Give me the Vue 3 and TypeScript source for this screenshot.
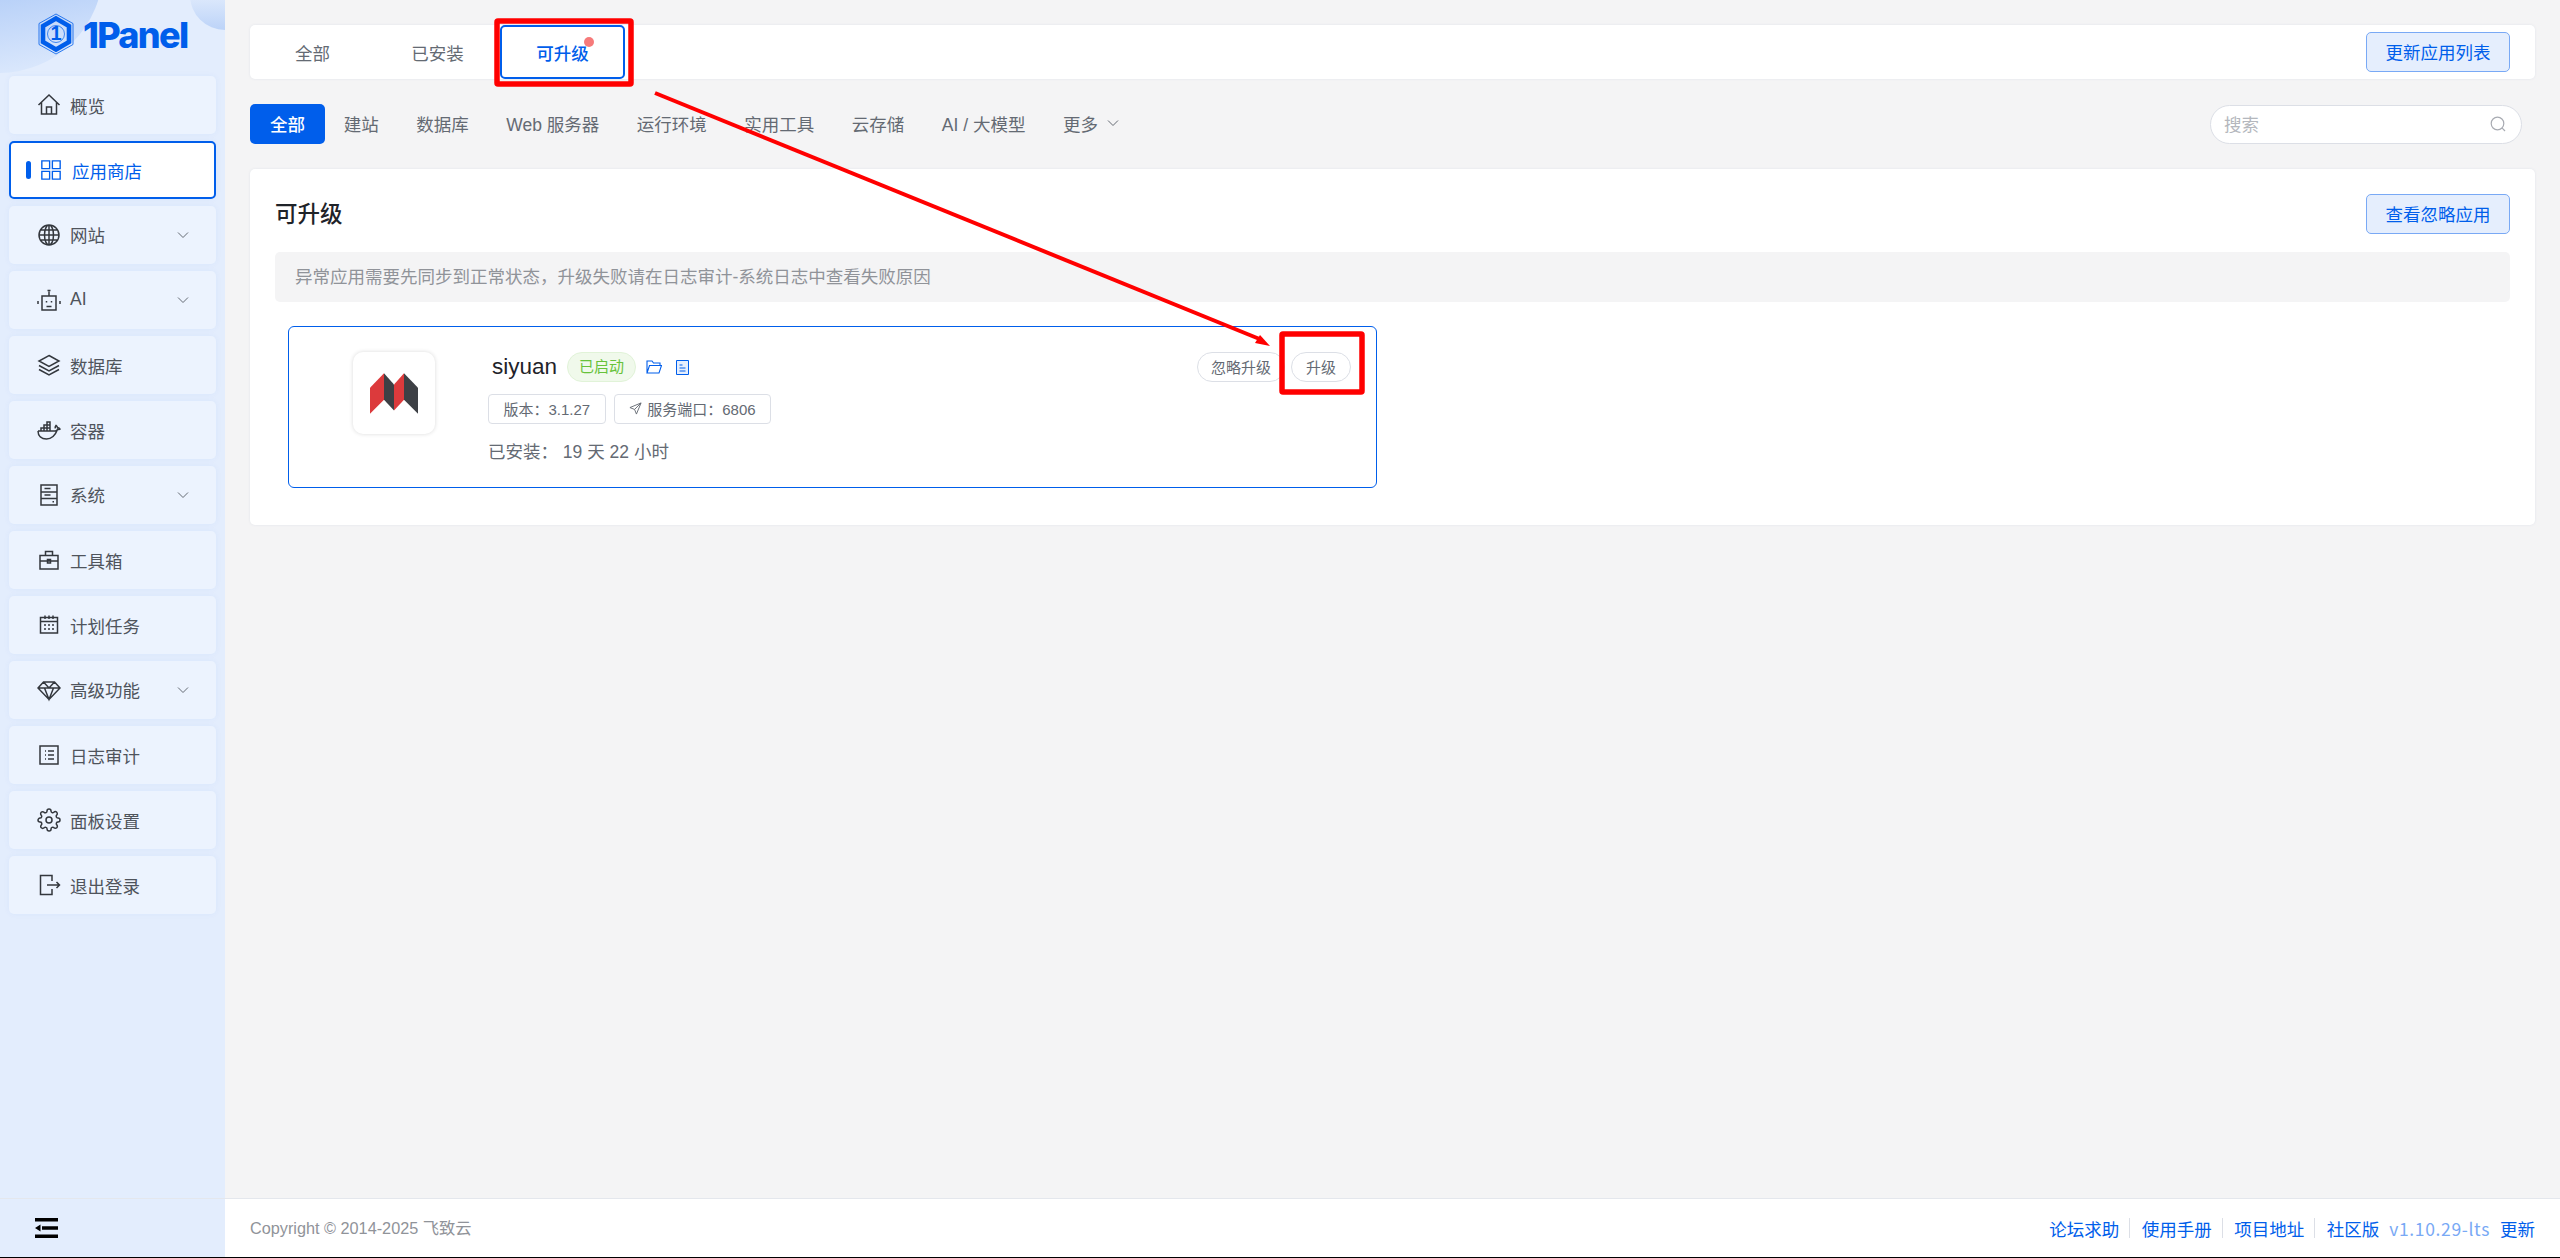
<script setup lang="ts">
interface MenuItem { label: string; d: string; arrow?: boolean; active?: boolean }

const gear = 'M12 15a3 3 0 1 0 0-6 3 3 0 0 0 0 6z M19.4 15a1.65 1.65 0 0 0 .33 1.82l.06.06a2 2 0 0 1 0 2.83 2 2 0 0 1-2.83 0l-.06-.06a1.65 1.65 0 0 0-1.82-.33 1.65 1.65 0 0 0-1 1.51V21a2 2 0 0 1-2 2 2 2 0 0 1-2-2v-.09A1.65 1.65 0 0 0 9 19.4a1.65 1.65 0 0 0-1.82.33l-.06.06a2 2 0 0 1-2.83 0 2 2 0 0 1 0-2.83l.06-.06a1.65 1.65 0 0 0 .33-1.82 1.65 1.65 0 0 0-1.51-1H3a2 2 0 0 1-2-2 2 2 0 0 1 2-2h.09A1.65 1.65 0 0 0 4.6 9a1.65 1.65 0 0 0-.33-1.82l-.06-.06a2 2 0 0 1 0-2.83 2 2 0 0 1 2.83 0l.06.06a1.65 1.65 0 0 0 1.82.33H9a1.65 1.65 0 0 0 1-1.51V3a2 2 0 0 1 2-2 2 2 0 0 1 2 2v.09a1.65 1.65 0 0 0 1 1.51 1.65 1.65 0 0 0 1.82-.33l.06-.06a2 2 0 0 1 2.83 0 2 2 0 0 1 0 2.83l-.06.06a1.65 1.65 0 0 0-.33 1.82V9a1.65 1.65 0 0 0 1.51 1H21a2 2 0 0 1 2 2 2 2 0 0 1-2 2h-.09a1.65 1.65 0 0 0-1.51 1z'

const menu: MenuItem[] = [
  { label: '概览', d: 'M1.5 12 12 2l10.5 10M4.5 9.5V21h15V9.5M9.5 21v-7h5v7' },
  { label: '应用商店', active: true, d: 'M2 2h8.5v8.5H2zM13.5 2H22v8.5h-8.5zM2 13.5h8.5V22H2zM13.5 13.5H22V22h-8.5z' },
  { label: '网站', arrow: true, d: 'M12 2a10 10 0 1 0 0 20a10 10 0 1 0 0-20zM12 2a4.5 10 0 0 0 0 20a4.5 10 0 0 0 0-20zM12 2v20M2 12h20M3.3 7h17.4M3.3 17h17.4' },
  { label: 'AI', arrow: true, d: 'M5 8h14v14H5zM12 8V3.5M10.5 2.5h3M9.5 13v1.5M14.5 13v1.5M9.5 18.5h5M1 13v3M23 13v3' },
  { label: '数据库', d: 'M12 2.5 22 8 12 13.5 2 8zM2 12.5 12 18l10-5.5M2 16.5 12 22l10-5.5' },
  { label: '容器', d: 'M1 13h17c1 0 2-.5 2.5-1.5.7.2 1.5 0 2.5-.5-.5-1-1.5-1.5-2.5-1.3-.2-1-.8-1.8-1.5-2.3-.7.8-1 2-.5 3M1 13c0 5 3.5 8 8.5 8 5 0 8.5-3 11-9.5M4 13v-3h3v3M7 13v-3h3v3M10 13v-3h3v3M7 10V7h3v3M10 10V7h3v3M10 7V4h3v3' },
  { label: '系统', arrow: true, d: 'M4 2h16v20H4zM4 9h16M4 15.5h16M7.5 5.5h6M7.5 12h6M15.5 18.8h1.5' },
  { label: '工具箱', d: 'M3 7.5h18V21H3zM8.5 7.5V3.5h7v4M3 13h18M10.5 11.5h3v3.5h-3z' },
  { label: '计划任务', d: 'M3.5 4.5h17V20h-17zM3.5 8.5h17M8 2.5v3.5M12 2.5v3.5M16 2.5v3.5M7 12h2M11 12h2M15 12h2M7 16h2M11 16h2M15 16h2' },
  { label: '高级功能', arrow: true, d: 'M6.5 4h11L23 10 12 21.5 1 10zM1 10h22M6.5 4 12 10l5.5-6M7.5 10 12 21.5 16.5 10' },
  { label: '日志审计', d: 'M3 3h18v18H3zM8 8h1M11 8h6M8 12h1M11 12h6M8 16h1M11 16h6' },
  { label: '面板设置', d: gear },
  { label: '退出登录', d: 'M15 8V2.5H3.5v19H15V16M10 12h12.5M19.5 9l3 3-3 3' },
]

const tabs = ['全部', '已安装', '可升级']
const categories = ['全部', '建站', '数据库', 'Web 服务器', '运行环境', '实用工具', '云存储', 'AI / 大模型']
const links = ['论坛求助', '使用手册', '项目地址']
</script>

<template>
  <div class="page">
    <aside class="sidebar">
      <div class="logo">
        <svg class="logo-mark" viewBox="0 0 36 42" width="36" height="42">
          <path d="M18 1 35 10.5v21L18 41 1 31.5v-21z" fill="none" stroke="#005eeb" stroke-width="0.8" />
          <path d="M18 5.5 31 13v16l-13 7.5L5 29V13z" fill="none" stroke="#005eeb" stroke-width="4.6" />
          <circle cx="18" cy="21" r="8.5" fill="none" stroke="#005eeb" stroke-width="0.7" />
          <text x="18" y="27" text-anchor="middle" class="logo-one">1</text>
        </svg>
        <span class="logo-text">1Panel</span>
      </div>
      <nav class="menu">
        <div v-for="item in menu" :key="item.label" class="menu-item" :class="{ active: item.active, 'has-arrow': item.arrow }">
          <i v-if="item.active" class="bar"></i>
          <svg class="menu-icon" viewBox="0 0 24 24" fill="none" stroke="currentColor" stroke-width="1.5">
            <path :d="item.d" />
          </svg>
          <span class="menu-label">{{ item.label }}</span>
          <svg v-if="item.arrow" class="chev" viewBox="0 0 12 8" fill="none" stroke="currentColor" stroke-width="1">
            <path d="M1 1.5 6 6.5 11 1.5" />
          </svg>
        </div>
      </nav>
      <div class="collapse">
        <svg viewBox="0 0 23 20" width="23" height="20">
          <path d="M0 0h23v3.5H0zM0 16.5h23V20H0zM7 8.2h16v3.6H7zM5.5 6.5v7L0 10z" fill="#000" />
        </svg>
      </div>
    </aside>

    <div class="main">
      <div class="content">
        <header class="tabs-card">
          <div class="tabs">
            <div v-for="(t, i) in tabs" :key="t" class="tab" :class="{ current: i === 2 }">
              {{ t }}<i v-if="i === 2" class="dot"></i>
            </div>
          </div>
          <button class="btn-soft">更新应用列表</button>
        </header>

        <div class="filters">
          <div class="cats">
            <span v-for="(c, i) in categories" :key="c" class="cat" :class="{ on: i === 0 }">{{ c }}</span>
            <span class="cat more">更多
              <svg viewBox="0 0 12 8" width="12" height="8" fill="none" stroke="currentColor" stroke-width="1"><path d="M1 1.5 6 6.5 11 1.5" /></svg>
            </span>
          </div>
          <div class="search">
            <span>搜索</span>
            <svg viewBox="0 0 16 16" width="16" height="16" fill="none" stroke="#a8abb2" stroke-width="1.2">
              <circle cx="7.5" cy="7.5" r="6.3" /><path d="M12.2 12.2 15 15" />
            </svg>
          </div>
        </div>

        <section class="panel">
          <div class="panel-head">
            <h2>可升级</h2>
            <button class="btn-soft">查看忽略应用</button>
          </div>
          <div class="alert">异常应用需要先同步到正常状态，升级失败请在日志审计-系统日志中查看失败原因</div>

          <article class="app">
            <div class="app-logo-col">
              <div class="app-logo">
                <svg viewBox="303 188 144 122" width="48" height="41">
                  <path d="M303 232 345 188V268L303 310z" fill="#dc3a3c" />
                  <path d="M345 188 375 222V300L345 268z" fill="#3d4045" />
                  <path d="M375 222 405 188V268L375 300z" fill="#dc3a3c" />
                  <path d="M405 188 447 232V310L405 268z" fill="#3d4045" />
                </svg>
              </div>
            </div>
            <div class="info">
              <div class="name-row">
                <span class="name">siyuan</span>
                <span class="status">已启动</span>
                <svg class="mini" viewBox="0 0 16 14" width="16" height="14" fill="none" stroke="#005eeb" stroke-width="1.1">
                  <path d="M1 13V1h5l1.5 2H14v2.5M1 13l2.5-7.5H15.5L13 13z" />
                </svg>
                <svg class="mini doc" viewBox="0 0 13 15" width="13" height="15" fill="#e5eefd" stroke="#005eeb" stroke-width="1">
                  <path d="M.5.5h12v14H.5zM3.5 5h3M3.5 8h6M3.5 11h6" />
                </svg>
              </div>
              <div class="tags">
                <span class="tag">版本：3.1.27</span>
                <span class="tag">
                  <svg viewBox="0 0 14 14" width="13" height="13" fill="none" stroke="#646a73" stroke-width="1"><path d="M13 1 1 6l5 2 2 5zM13 1 6 8" /></svg>
                  服务端口：6806
                </span>
              </div>
              <div class="installed">已安装： 19 天 22 小时</div>
            </div>
            <div class="actions">
              <button class="pill">忽略升级</button>
              <button class="pill short">升级</button>
            </div>
          </article>
        </section>
      </div>

      <footer class="footer">
        <span class="copy">Copyright © 2014-2025 飞致云</span>
        <div class="foot-links">
          <template v-for="l in links" :key="l">
            <span class="flink">{{ l }}</span><i class="sep"></i>
          </template>
          <span class="flink">社区版</span>
          <span class="ver">v1.10.29-lts</span>
          <span class="flink">更新</span>
        </div>
      </footer>
    </div>

    <svg class="marks" width="2560" height="1258" viewBox="0 0 2560 1258">
      <rect x="497" y="21" width="134" height="63" fill="none" stroke="#f00" stroke-width="5.5" rx="1" />
      <rect x="1282" y="334" width="80" height="58" fill="none" stroke="#f00" stroke-width="5.5" rx="1" />
      <path d="M655 93 1262 340" stroke="#f00" stroke-width="4" fill="none" />
      <path d="M1270 346 1255 343 1260 335z" fill="#f00" />
    </svg>
  </div>
</template>

<style>
html, body { margin: 0; background: #f4f4f5; }
</style>

<style scoped>
.page {
  position: relative;
  display: flex;
  width: 2560px;
  height: 1258px;
  box-sizing: border-box;
  border-bottom: 1px solid #000;
  overflow: hidden;
  font-family: "Liberation Sans", "Noto Sans CJK SC", sans-serif;
  font-size: 17.5px;
  color: #646a73;
  background: #f4f4f5;
}
.sidebar {
  position: relative;
  flex: 0 0 225px;
  display: flex;
  flex-direction: column;
  background: #e3edfd;
  overflow: hidden;
}
.sidebar::before {
  content: "";
  position: absolute;
  left: -105px;
  top: -135px;
  width: 208px;
  height: 208px;
  border-radius: 50%;
  background: linear-gradient(170deg, #a6c5f6 45%, #e1ecfd 100%);
}
.sidebar::after {
  content: "";
  position: absolute;
  right: -35px;
  top: -40px;
  width: 70px;
  height: 70px;
  border-radius: 50%;
  background: linear-gradient(180deg, #e6effd 40%, #bcd3f8 100%);
}
.logo {
  position: relative;
  z-index: 1;
  height: 76px;
  display: flex;
  align-items: flex-start;
  padding: 13px 0 0 38px;
  box-sizing: border-box;
  gap: 9px;
}
.logo-one { font: 700 20px "Liberation Sans", sans-serif; fill: #005eeb; }
.logo-text {
  margin-top: 1px;
  font: 800 36px/42px Inter, sans-serif;
  letter-spacing: -1.7px;
  color: #005eeb;
}
.menu {
  position: relative;
  z-index: 1;
  display: flex;
  flex-direction: column;
  gap: 7px;
  padding: 0 9px;
}
.menu-item {
  display: flex;
  align-items: center;
  height: 58px;
  box-sizing: border-box;
  padding: 0 27px 0 28px;
  gap: 9px;
  background: #ecf3fe;
  border-radius: 5px;
  box-shadow: 0 0 6px rgba(0, 94, 235, 0.05);
  color: #33373d;
}
.menu-label { flex: 1; color: #4f545c; }
.has-arrow .menu-label { padding-bottom: 2px; }
.menu-item.active {
  background: #fff;
  border: 2px solid #005eeb;
  padding-left: 15px;
  gap: 10px;
  color: #005eeb;
}
.menu-item.active .menu-label { color: #005eeb; }
.bar {
  width: 5px;
  height: 18px;
  border-radius: 3px;
  background: #005eeb;
  margin-right: -1px;
  margin-top: -1px;
}
.menu-icon { width: 24px; height: 24px; flex: none; }
.active .menu-icon { width: 22px; height: 22px; }
.chev { width: 12px; height: 8px; color: #646a73; flex: none; }
.collapse {
  margin-top: auto;
  height: 59px;
  box-sizing: border-box;
  border-top: 1px solid #e4e7ed;
  padding: 19px 0 0 35px;
}
.collapse svg { display: block; }

.main { flex: 1; display: flex; flex-direction: column; min-width: 0; }
.content { flex: 1; padding: 25px 25px 0; }

.tabs-card {
  display: flex;
  align-items: center;
  justify-content: space-between;
  height: 54px;
  padding-right: 25px;
  background: #fff;
  border-radius: 5px;
  box-shadow: 0 0 3px rgba(0, 50, 120, 0.08);
}
.tabs { display: flex; height: 100%; }
.tab {
  position: relative;
  width: 125px;
  display: flex;
  align-items: center;
  justify-content: center;
  box-sizing: border-box;
}
.tab.current {
  border: 2px solid #005eeb;
  border-radius: 5px;
  color: #005eeb;
  font-weight: 500;
}
.dot {
  position: absolute;
  left: 82px;
  top: 10px;
  width: 10px;
  height: 10px;
  border-radius: 50%;
  background: #f56c6c;
  opacity: 0.9;
}
.btn-soft {
  height: 40px;
  width: 144px;
  padding: 0 0 2px;
  border: 1px solid #79a9f5;
  border-radius: 5px;
  background: #e5eefd;
  color: #005eeb;
  font: inherit;
}
.filters {
  display: flex;
  align-items: center;
  justify-content: space-between;
  margin-top: 25px;
  height: 40px;
}
.cats { display: flex; height: 100%; }
.cat {
  display: flex;
  align-items: center;
  gap: 9px;
  padding: 0 18.75px 2px;
  box-sizing: border-box;
}
.cat.on {
  width: 75px;
  padding: 0 0 2px;
  justify-content: center;
  background: #005eeb;
  color: #fff;
  border-radius: 5px;
  font-weight: 500;
}
.search {
  width: 312px;
  height: 39px;
  box-sizing: border-box;
  margin-right: 13px;
  padding: 0 15px 2px 13px;
  display: flex;
  align-items: center;
  justify-content: space-between;
  background: #fff;
  border: 1px solid #dcdfe6;
  border-radius: 20px;
  color: #b4b7bd;
}
.search svg { margin-top: 2px; }
.panel {
  margin-top: 25px;
  height: 356px;
  box-sizing: border-box;
  padding: 25px;
  background: #fff;
  border-radius: 5px;
  box-shadow: 0 0 3px rgba(0, 50, 120, 0.08);
}
.panel-head {
  display: flex;
  align-items: center;
  justify-content: space-between;
  height: 40px;
}
.panel-head h2 {
  margin: 0 0 5px;
  font-size: 22.5px;
  font-weight: 500;
  color: #1f2329;
}
.alert {
  margin-top: 18px;
  height: 50px;
  line-height: 50px;
  padding: 0 20px;
  background: #f4f4f5;
  border-radius: 5px;
  color: #909399;
}
.app {
  display: flex;
  position: relative;
  width: 1089px;
  height: 162px;
  box-sizing: border-box;
  margin: 24px 0 0 13px;
  border: 1.25px solid #005eeb;
  border-radius: 6px;
}
.app-logo-col { width: 199px; flex: none; padding: 25px 0 0 64px; box-sizing: border-box; }
.app-logo {
  width: 82px;
  height: 82px;
  display: flex;
  align-items: center;
  justify-content: center;
  border-radius: 10px;
  background: #fff;
  box-shadow: 0 0 4px rgba(0, 0, 0, 0.15);
}
.info { flex: 1; padding-top: 25px; }
.name-row { display: flex; align-items: center; height: 30px; }
.name { font-size: 22.5px; color: #1f2329; margin-left: 4px; margin-right: 10px; }
.status {
  width: 69px;
  height: 30px;
  box-sizing: border-box;
  text-align: center;
  line-height: 27px;
  font-size: 15px;
  color: #67c23a;
  background: #f0f9eb;
  border: 1px solid #e1f3d8;
  border-radius: 15px;
}
.mini { margin-left: 10px; }
.doc { margin-left: 14px; }
.tags { display: flex; gap: 8px; margin-top: 12px; }
.tag {
  display: flex;
  align-items: center;
  gap: 5px;
  height: 30px;
  padding: 0 14.5px 1px;
  box-sizing: border-box;
  font-size: 15px;
  border: 1px solid #dcdfe6;
  border-radius: 4px;
}
.installed { margin-top: 14px; font-size: 17.5px; }
.actions {
  position: absolute;
  right: 25px;
  top: 25px;
  display: flex;
  gap: 6px;
}
.pill {
  height: 30px;
  width: 88px;
  padding: 0 0 2px;
  font: inherit;
  font-size: 15px;
  color: #646a73;
  background: #fff;
  border: 1px solid #dcdfe6;
  border-radius: 15px;
}
.pill.short { width: 60px; }
.footer {
  height: 59px;
  box-sizing: border-box;
  border-top: 1px solid #e4e7ed;
  background: #fff;
  padding: 0 25px;
  display: flex;
  align-items: center;
  justify-content: space-between;
}
.copy { font-size: 16.25px; color: #909399; margin-bottom: 3px; }
.foot-links { display: flex; align-items: center; }
.flink { color: #005eeb; }
.sep { width: 1px; height: 20px; background: #dcdfe6; margin: 0 11.5px 0 10px; }
.ver { color: #79a9f5; margin: 0 10px; letter-spacing: 0.65px; font-family: "Noto Sans CJK SC", sans-serif; }
.marks { position: absolute; left: 0; top: 0; pointer-events: none; }
</style>
